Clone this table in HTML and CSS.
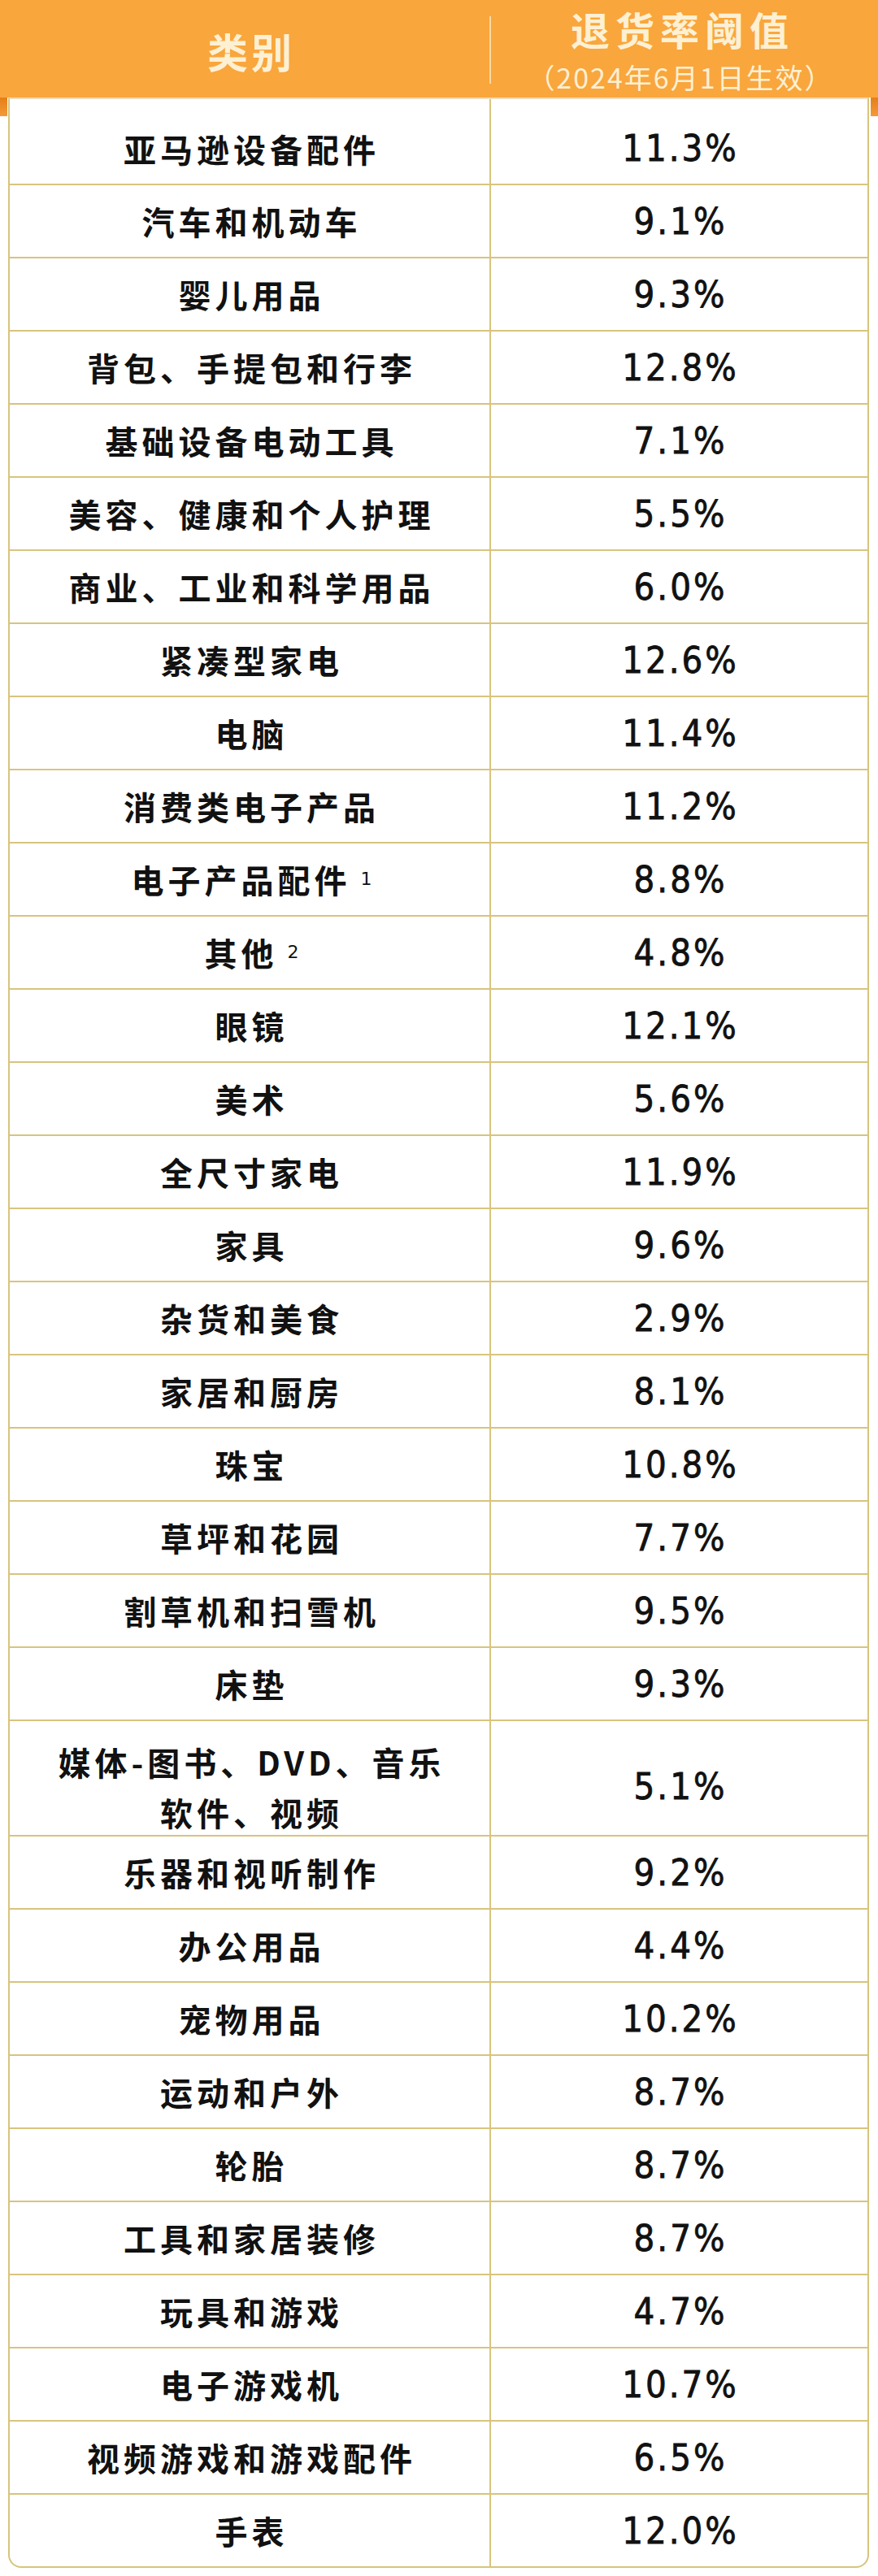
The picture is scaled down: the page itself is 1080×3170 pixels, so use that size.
FILE: index.html
```html
<!DOCTYPE html>
<html lang="zh-CN">
<head>
<meta charset="utf-8">
<title>退货率阈值</title>
<link rel="stylesheet" href="styles.css">
</head>
<body>
<div class="page">
  <div class="header">
    <div class="h-cat">类别</div>
    <div class="h-div"></div>
    <div class="h-rate">
      <div class="h-title">退货率阈值</div>
      <div class="h-sub">（2024年6月1日生效）</div>
    </div>
  </div>
  <div class="table">
    <div class="row first"><div class="cat">亚马逊设备配件</div><div class="val">11.3%</div></div>
    <div class="row"><div class="cat">汽车和机动车</div><div class="val">9.1%</div></div>
    <div class="row"><div class="cat">婴儿用品</div><div class="val">9.3%</div></div>
    <div class="row"><div class="cat">背包、手提包和行李</div><div class="val">12.8%</div></div>
    <div class="row"><div class="cat">基础设备电动工具</div><div class="val">7.1%</div></div>
    <div class="row"><div class="cat">美容、健康和个人护理</div><div class="val">5.5%</div></div>
    <div class="row"><div class="cat">商业、工业和科学用品</div><div class="val">6.0%</div></div>
    <div class="row"><div class="cat">紧凑型家电</div><div class="val">12.6%</div></div>
    <div class="row"><div class="cat">电脑</div><div class="val">11.4%</div></div>
    <div class="row"><div class="cat">消费类电子产品</div><div class="val">11.2%</div></div>
    <div class="row"><div class="cat">电子产品配件<sup class="note">1</sup></div><div class="val">8.8%</div></div>
    <div class="row"><div class="cat">其他<sup class="note">2</sup></div><div class="val">4.8%</div></div>
    <div class="row"><div class="cat">眼镜</div><div class="val">12.1%</div></div>
    <div class="row"><div class="cat">美术</div><div class="val">5.6%</div></div>
    <div class="row"><div class="cat">全尺寸家电</div><div class="val">11.9%</div></div>
    <div class="row"><div class="cat">家具</div><div class="val">9.6%</div></div>
    <div class="row"><div class="cat">杂货和美食</div><div class="val">2.9%</div></div>
    <div class="row"><div class="cat">家居和厨房</div><div class="val">8.1%</div></div>
    <div class="row"><div class="cat">珠宝</div><div class="val">10.8%</div></div>
    <div class="row"><div class="cat">草坪和花园</div><div class="val">7.7%</div></div>
    <div class="row"><div class="cat">割草机和扫雪机</div><div class="val">9.5%</div></div>
    <div class="row"><div class="cat">床垫</div><div class="val">9.3%</div></div>
    <div class="row double"><div class="cat">媒体-图书、DVD、音乐<br>软件、视频</div><div class="val">5.1%</div></div>
    <div class="row"><div class="cat">乐器和视听制作</div><div class="val">9.2%</div></div>
    <div class="row"><div class="cat">办公用品</div><div class="val">4.4%</div></div>
    <div class="row"><div class="cat">宠物用品</div><div class="val">10.2%</div></div>
    <div class="row"><div class="cat">运动和户外</div><div class="val">8.7%</div></div>
    <div class="row"><div class="cat">轮胎</div><div class="val">8.7%</div></div>
    <div class="row"><div class="cat">工具和家居装修</div><div class="val">8.7%</div></div>
    <div class="row"><div class="cat">玩具和游戏</div><div class="val">4.7%</div></div>
    <div class="row"><div class="cat">电子游戏机</div><div class="val">10.7%</div></div>
    <div class="row"><div class="cat">视频游戏和游戏配件</div><div class="val">6.5%</div></div>
    <div class="row last"><div class="cat">手表</div><div class="val">12.0%</div></div>
  </div>
</div>
</body>
</html>
```

FILE: styles.css
```css
* {
  box-sizing: border-box;
}

html, body {
  margin: 0;
  padding: 0;
  background: #ffffff;
}

.page {
  width: 1080px;
  height: 3170px;
  background: #ffffff;
  font-family: "Noto Sans CJK SC", "Noto Sans", sans-serif;
}

/* Header band */
.header {
  position: relative;
  height: 120px;
  background: #f9a63d;
  display: flex;
  align-items: stretch;
  padding: 0 12px 0 12px;
  color: #fdf0d3;
}

.header::before,
.header::after {
  content: "";
  position: absolute;
  top: 120px;
  width: 9px;
  height: 23px;
  background: linear-gradient(#e57f17, #f39a3a);
}

.header::before {
  left: 0;
}

.header::after {
  right: 0;
}

.h-cat {
  width: 590px;
  display: flex;
  align-items: center;
  justify-content: center;
  font-size: 50px;
  font-weight: 700;
  letter-spacing: 4px;
  padding-left: 4px;
  padding-top: 4px;
}

.h-div {
  width: 2px;
  margin: 20px 0 17px 0;
  background: #fbd9a3;
}

.h-rate {
  flex: 1;
  display: flex;
  flex-direction: column;
  align-items: center;
}

.h-title {
  font-size: 48px;
  line-height: 70px;
  height: 70px;
  font-weight: 700;
  letter-spacing: 7px;
  padding-left: 7px;
}

.h-sub {
  font-size: 34px;
  line-height: 50px;
  height: 50px;
  font-weight: 400;
  letter-spacing: 2px;
  padding-left: 2px;
}

/* Table */
.table {
  margin-left: 10px;
  width: 1059px;
  border: 2px solid #d8c47e;
  border-top-color: #eedcbc;
  border-radius: 0 0 16px 16px;
  overflow: hidden;
  background: #ffffff;
}

.row {
  display: flex;
  height: 90px;
  border-bottom: 2px solid #d8c47e;
}

.row.first {
  height: 106px;
  padding-top: 16px;
}

.row.double {
  height: 142px;
  padding-top: 20px;
}

.row.last {
  height: 88px;
  border-bottom: none;
}

.cat {
  width: 592px;
  border-right: 2px solid #d8c47e;
  display: flex;
  align-items: center;
  justify-content: center;
  text-align: center;
  font-size: 40px;
  line-height: 62px;
  font-weight: 700;
  letter-spacing: 5px;
  padding-left: 5px;
  color: #111111;
}

.row.first .cat {
  height: 106px;
  margin-top: -16px;
  padding-top: 16px;
}

.row.double .cat {
  height: 142px;
  margin-top: -20px;
  padding-top: 20px;
}

.note {
  font-family: "DejaVu Sans", sans-serif;
  font-size: 22px;
  font-weight: 400;
  letter-spacing: 0;
  vertical-align: 14px;
  line-height: 0;
  margin-left: 12px;
}

.val {
  flex: 1;
  display: flex;
  align-items: center;
  justify-content: center;
  font-family: "DejaVu Sans Condensed", "DejaVu Sans", sans-serif;
  font-stretch: condensed;
  font-size: 45px;
  font-weight: 400;
  letter-spacing: 3px;
  padding-left: 3px;
  -webkit-text-stroke: 0.8px #111111;
  color: #111111;
}
```
